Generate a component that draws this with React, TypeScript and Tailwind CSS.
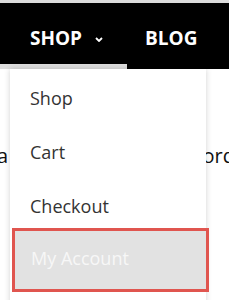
import React from "react";

export default function App() {
  const font = { fontFamily: '"Open Sans", "Noto Sans", sans-serif' };
  return (
    <div className="relative w-[229px] h-[300px] overflow-hidden bg-white" style={font}>
      <div className="h-[3px] bg-[#dcdcdc]" />
      <div className="relative h-[66px] bg-black">
        <div className="flex items-center h-[66px] pt-[5px] pl-[30px] text-white font-bold text-[19px]">
          <span>SHOP</span>
          <svg className="ml-[13px] mt-[1px]" width="8" height="5" viewBox="0 0 8 5">
            <path d="M1 1 L4 4 L7 1" stroke="white" strokeWidth="1.8" fill="none" />
          </svg>
          <span className="ml-[42px]">BLOG</span>
        </div>
        <div className="absolute left-0 bottom-0 w-[127px] h-[5px] bg-[#dedede]" />
      </div>
      <div className="flex justify-between items-center mt-[72px] text-[20px] text-[#111]">
        <span className="-ml-[3px]">a</span>
        <span className="-mr-[6px]">ord</span>
      </div>
      <div className="absolute left-[10px] top-[69px] w-[196px] h-[240px] bg-white shadow-[0_0_6px_rgba(0,0,0,0.18)] pt-[2px] text-[18px] text-[#333]">
        <div className="h-[54px] flex items-center pl-[20px]">Shop</div>
        <div className="h-[54px] flex items-center pl-[20px]">Cart</div>
        <div className="h-[54px] flex items-center pl-[20px]">Checkout</div>
        <div className="mt-[-5px] ml-[2px] mr-[-3px] h-[64px] flex items-center pl-[16px] pb-[3px] border-[3px] border-[#e0554f] bg-[#e2e2e2] text-[#f7f7f7]">
          My Account
        </div>
      </div>
    </div>
  );
}
